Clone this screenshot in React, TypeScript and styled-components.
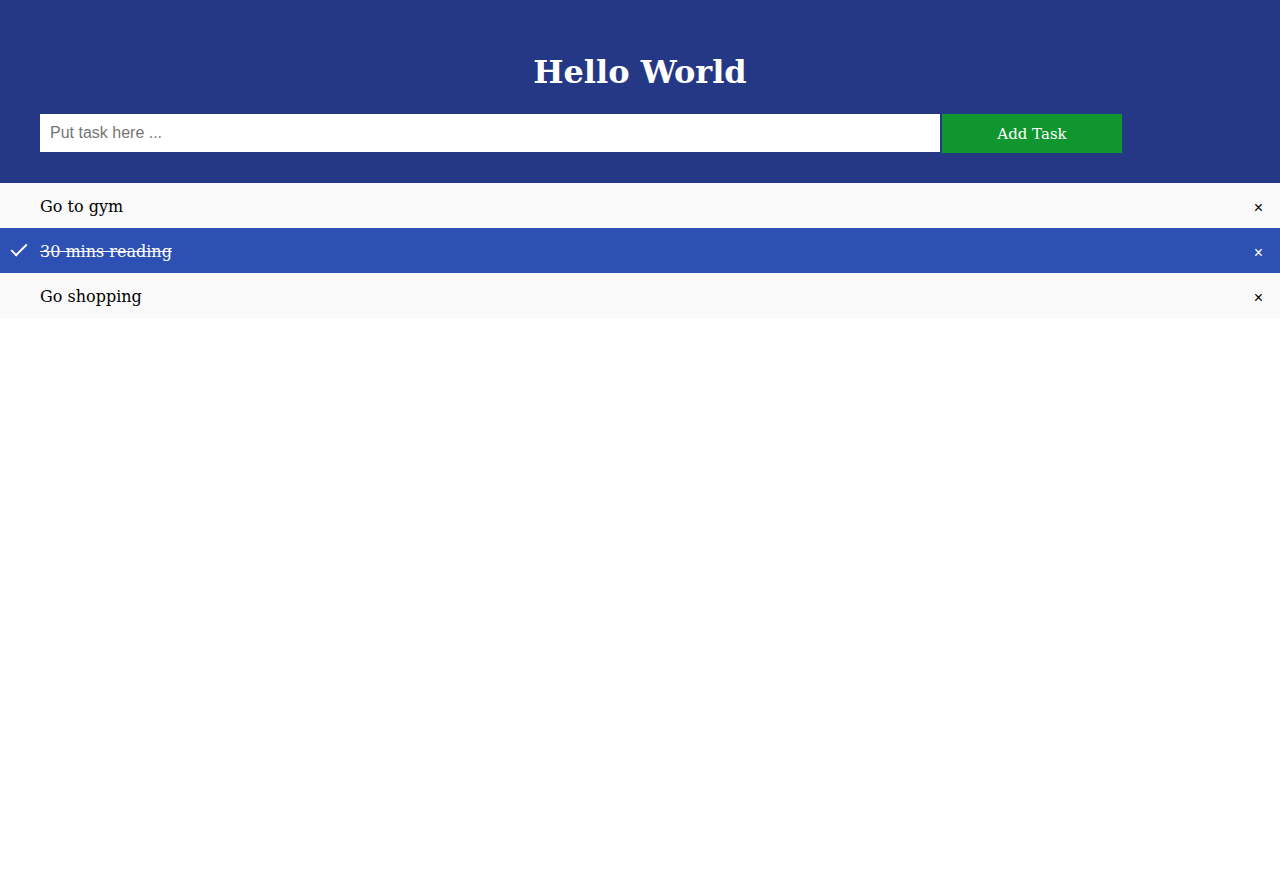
import {useState} from "react";
import styled, {createGlobalStyle} from "styled-components";

const GlobalStyle = createGlobalStyle`
    body {
        margin: 0;
        background: #ffffff;
        font-family: Georgia, "DejaVu Serif", serif;
    }
`;

const Header = styled.header`
    background: #253885;
    padding: 50px 40px 30px;
    color: #ffffff;
`;

const Title = styled.h2`
    margin: 0 0 20px;
    text-align: center;
    font-size: 32px;
    line-height: 44px;
    font-weight: bold;
`;

const Form = styled.div`
    display: flex;
    align-items: flex-start;
    gap: 2px;
`;

const Input = styled.input`
    box-sizing: border-box;
    width: 900px;
    height: 38px;
    border: none;
    padding: 0 10px;
    font-family: "Liberation Sans", Arial, sans-serif;
    font-size: 16px;
    outline: none;
    &::placeholder {
        color: #757575;
    }
`;

const AddButton = styled.button`
    width: 180px;
    height: 39px;
    border: none;
    background: #10962e;
    color: #ffffff;
    font-family: Georgia, "DejaVu Serif", serif;
    font-size: 15px;
    cursor: pointer;
`;

const List = styled.ul`
    margin: 0;
    padding: 0;
    list-style: none;
`;

const Item = styled.li<{$checked: boolean}>`
    position: relative;
    display: flex;
    align-items: center;
    box-sizing: border-box;
    height: 45px;
    padding: 2px 40px 0;
    font-size: 16px;
    background: ${({$checked}) => ($checked ? "#2c50b3" : "#f9f9f9")};
    color: ${({$checked}) => ($checked ? "#ffffff" : "#000000")};
    text-decoration: ${({$checked}) => ($checked ? "line-through" : "none")};
    cursor: pointer;
`;

const Check = styled.span`
    position: absolute;
    left: 15px;
    top: 12px;
    width: 6px;
    height: 14px;
    border-style: solid;
    border-color: #ffffff;
    border-width: 0 2px 2px 0;
    transform: rotate(45deg);
`;

const Close = styled.span`
    position: absolute;
    right: 17px;
    top: 50%;
    transform: translateY(-40%);
    font-family: "Liberation Sans", Arial, sans-serif;
    font-size: 16px;
`;

const initialTasks = [
    {text: "Go to gym", done: false},
    {text: "30 mins reading", done: true},
    {text: "Go shopping", done: false},
];

export default function App() {
    const [tasks, setTasks] = useState(initialTasks);

    const toggle = (i: number) =>
        setTasks(tasks.map((t, j) => (j === i ? {...t, done: !t.done} : t)));

    return (
        <>
            <GlobalStyle />
            <Header>
                <Title>Hello World</Title>
                <Form>
                    <Input placeholder="Put task here ..." />
                    <AddButton>Add Task</AddButton>
                </Form>
            </Header>
            <List>
                {tasks.map((task, i) => (
                    <Item key={task.text} $checked={task.done} onClick={() => toggle(i)}>
                        {task.done && <Check />}
                        {task.text}
                        <Close>×</Close>
                    </Item>
                ))}
            </List>
        </>
    );
}
